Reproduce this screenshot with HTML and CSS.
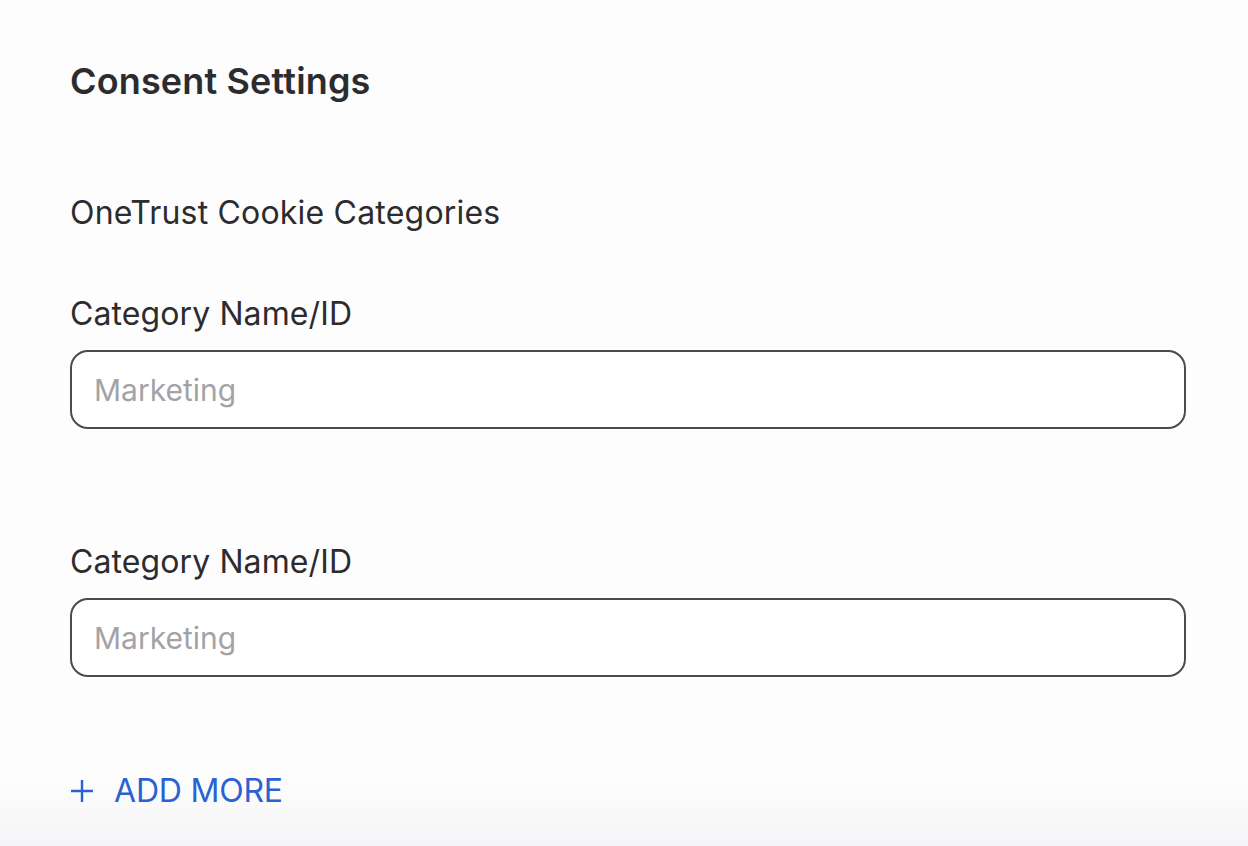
FILE: index.html
```html
<!DOCTYPE html>
<html lang="en">
<head>
<meta charset="utf-8">
<title>Consent Settings</title>
<link rel="stylesheet" href="styles.css">
</head>
<body>
<main class="panel">
  <h1 class="title">Consent Settings</h1>
  <h2 class="subtitle">OneTrust Cookie Categories</h2>
  <div class="field">
    <label class="label" for="cat1">Category Name/ID</label>
    <input class="input" id="cat1" type="text" placeholder="Marketing">
  </div>
  <div class="field">
    <label class="label" for="cat2">Category Name/ID</label>
    <input class="input" id="cat2" type="text" placeholder="Marketing">
  </div>
  <button class="add-more" type="button">
    <svg class="plus" width="24" height="24" viewBox="0 0 24 24" aria-hidden="true"><path d="M12 1v22M1 12h22" stroke="currentColor" stroke-width="2.4" fill="none"/></svg>
    <span>ADD MORE</span>
  </button>
</main>
</body>
</html>
```
FILE: styles.css
```css
html, body {
  margin: 0;
  padding: 0;
  height: 100%;
}
body {
  font-family: Inter, "Noto Sans", sans-serif;
  color: #2c2c2e;
  background: linear-gradient(to bottom, #fdfdfe 0%, #fdfdfe 92%, #f5f5f7 100%);
}
.panel {
  padding: 56px 62px 0 70px;
  display: flex;
  flex-direction: column;
}
.title {
  margin: 0;
  font-size: 36px;
  font-weight: 600;
  line-height: 50px;
  letter-spacing: 0.15px;
}
.subtitle {
  margin: 87px 0 0 0;
  font-size: 32px;
  font-weight: 400;
  line-height: 40px;
  letter-spacing: 0.2px;
}
.field {
  display: flex;
  flex-direction: column;
}
.field + .field {
  margin-top: 113px;
}
.subtitle + .field {
  margin-top: 61px;
}
.label {
  font-size: 32px;
  line-height: 40px;
  margin-bottom: 16px;
  letter-spacing: 0.1px;
}
.input {
  box-sizing: border-box;
  height: 79px;
  border: 2px solid #4b4b4d;
  border-radius: 18px;
  background: #ffffff;
  padding: 0 22px;
  font-family: Inter, "Noto Sans", sans-serif;
  font-size: 30px;
  color: #2c2c2e;
  outline: none;
}
.input::placeholder {
  color: #a3a3a6;
}
.add-more {
  margin-top: 94px;
  align-self: flex-start;
  display: flex;
  align-items: center;
  gap: 20px;
  padding: 0;
  border: 0;
  background: transparent;
  color: #2a62d2;
  font-family: Inter, "Noto Sans", sans-serif;
  font-size: 32px;
  font-weight: 400;
  line-height: 40px;
  letter-spacing: -0.2px;
  cursor: pointer;
}
.plus {
  display: block;
}
```
